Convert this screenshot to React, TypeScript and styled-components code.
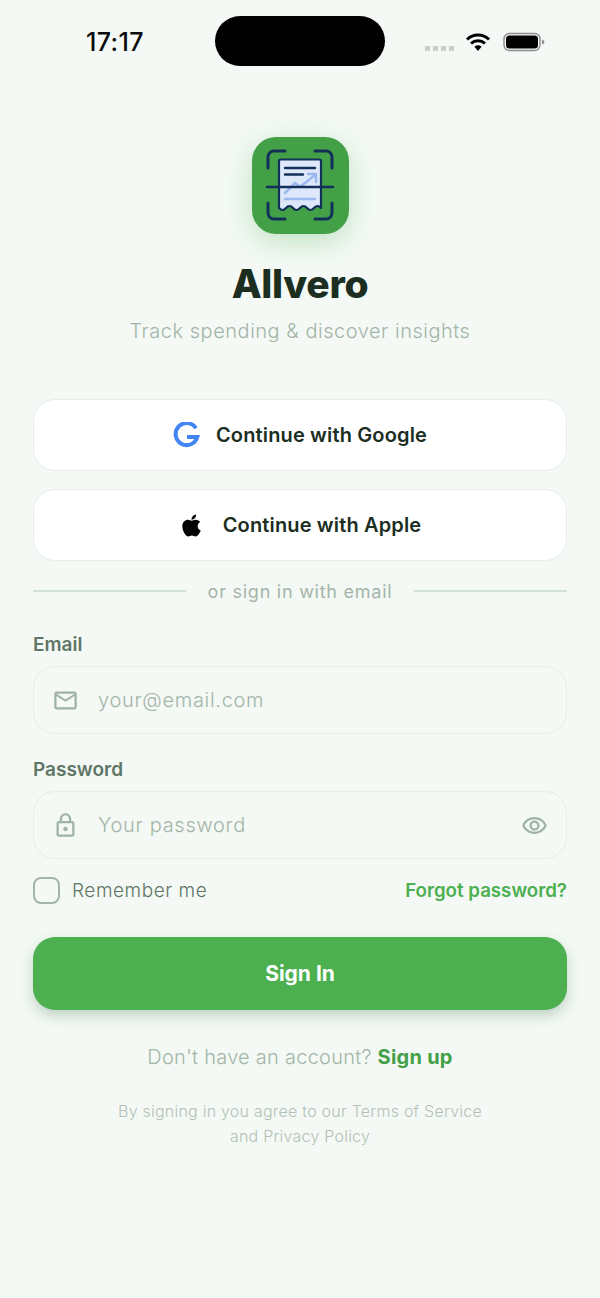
import { createGlobalStyle, styled } from "styled-components";
import { FaApple } from "react-icons/fa";
import { MdLockOutline, MdMailOutline, MdOutlineRemoveRedEye } from "react-icons/md";

const GlobalStyle = createGlobalStyle`
  html, body {
    margin: 0;
    padding: 0;
    background: #f4f9f5;
  }
  * {
    box-sizing: border-box;
  }
  body {
    font-family: Inter, "Noto Sans", sans-serif;
  }
`;

const Page = styled.main`
  width: 600px;
  height: 1298px;
  overflow: hidden;
  background: #f4f9f5;
`;

const StatusBar = styled.header`
  display: grid;
  grid-template-columns: 215px 170px 1fr;
  padding-top: 16px;
  height: 66px;
`;

const Clock = styled.div`
  padding: 11px 0 0 86px;
  font-size: 25px;
  line-height: 30px;
  font-weight: 500;
  letter-spacing: 0.4px;
  color: #0b0b0b;
`;

const Island = styled.div`
  height: 50px;
  border-radius: 25px;
  background: #000;
`;

const StatusIcons = styled.div`
  display: flex;
  align-items: flex-start;
  padding: 16px 0 0 40px;
`;

const Dots = styled.div`
  display: flex;
  gap: 3px;
  margin: 14px 11px 0 0;

  span {
    width: 5px;
    height: 5px;
    border-radius: 1px;
    background: #c9cdca;
  }
`;

const Battery = styled.svg`
  margin-left: 12px;
`;

const Hero = styled.section`
  display: flex;
  flex-direction: column;
  align-items: center;
  padding-top: 71px;
`;

const LogoTile = styled.div`
  width: 97px;
  height: 97px;
  border-radius: 24px;
  background: #43a047;
  box-shadow: 0 8px 28px rgba(76, 175, 80, 0.3);
`;

const Title = styled.h1`
  margin: 27px 0 0;
  font-size: 39px;
  line-height: 46px;
  font-weight: 800;
  letter-spacing: -0.3px;
  color: #1b2e1f;
`;

const Subtitle = styled.p`
  margin: 10px 0 0;
  font-size: 20px;
  line-height: 28px;
  font-weight: 300;
  letter-spacing: 0.52px;
  color: #a3b5a8;
`;

const Form = styled.section`
  display: flex;
  flex-direction: column;
  padding: 54px 33px 0;
`;

const SocialButton = styled.button<{ $gap: number }>`
  display: flex;
  align-items: center;
  justify-content: center;
  gap: ${(p) => p.$gap}px;
  width: 100%;
  height: 72px;
  margin-bottom: 18px;
  border: 1.5px solid #e6ede8;
  border-radius: 22px;
  background: #fff;
  font-family: inherit;
  font-size: 20px;
  font-weight: 600;
  letter-spacing: 0.15px;
  color: #1b2e1f;
`;

const Divider = styled.div`
  display: flex;
  align-items: center;
  gap: 22px;
  height: 24px;
  font-size: 18px;
  font-weight: 400;
  letter-spacing: 0.75px;
  color: #a3b5a8;

  &::before,
  &::after {
    content: "";
    flex: 1;
    height: 2px;
    background: #d3e0d6;
  }
`;

const FieldLabel = styled.label<{ $top: number }>`
  display: block;
  margin-top: ${(p) => p.$top}px;
  font-size: 19px;
  line-height: 24px;
  font-weight: 600;
  color: #5f7565;
`;

const InputBox = styled.div`
  display: flex;
  align-items: center;
  height: 68px;
  margin-top: 9px;
  padding: 0 18px;
  border: 1.5px solid #e6ede8;
  border-radius: 22px;
  background: #f4f9f5;
  color: #9fb3a5;
`;

const Placeholder = styled.span`
  flex: 1;
  margin-left: 19px;
  font-size: 20px;
  font-weight: 300;
  letter-spacing: 0.7px;
  color: #a3b5a8;
`;

const OptionsRow = styled.div`
  display: flex;
  align-items: center;
  justify-content: space-between;
  height: 26px;
  margin-top: 18px;
`;

const Remember = styled.div`
  display: flex;
  align-items: center;
  gap: 12px;
  font-size: 19px;
  font-weight: 300;
  letter-spacing: 0.55px;
  color: #5f7565;
`;

const CheckBox = styled.span`
  width: 27px;
  height: 27px;
  border: 2px solid #a3b5a8;
  border-radius: 8px;
`;

const ForgotLink = styled.a`
  font-size: 18.7px;
  font-weight: 600;
  color: #4caf50;
`;

const SignInButton = styled.button`
  height: 73px;
  margin-top: 34px;
  border: 0;
  border-radius: 22px;
  background: #4caf50;
  box-shadow: 0 6px 14px rgba(60, 110, 70, 0.28);
  font-family: inherit;
  font-size: 21px;
  font-weight: 700;
  color: #fff;
`;

const SignUpLine = styled.p`
  margin: 33px 0 0;
  text-align: center;
  font-size: 20px;
  line-height: 28px;
  font-weight: 300;
  letter-spacing: 0.25px;
  color: #a3b5a8;

  a {
    font-weight: 700;
    color: #43a047;
  }
`;

const Terms = styled.p`
  margin: 28px 0 0;
  text-align: center;
  font-size: 16px;
  line-height: 25px;
  font-weight: 300;
  letter-spacing: 0.23px;
  color: #b3c1b7;
`;

function Logo() {
  return (
    <svg width="97" height="97" viewBox="0 0 97 97" fill="none" strokeLinecap="round" strokeLinejoin="round">
      <path
        d="M27 24a1.500 1.500 0 0 1 1.500-1.500h39a1.500 1.500 0 0 1 1.500 1.500v47q-3.500-4-7 0t-7 0t-7 0t-7 0t-7 0t-7 0z"
        fill="#dde8fb"
        stroke="#12305a"
        strokeWidth="2.200"
      />
      <path d="M33 31h30M33 37.500h18" stroke="#12305a" strokeWidth="2.400" />
      <path d="M33 56l10-10 5 4 15-12M56 37h8v8M33 62h30" stroke="#9db8ee" strokeWidth="2.500" />
      <path d="M15 50h66" stroke="#12305a" strokeWidth="2.600" />
      <path
        d="M33 14h-11a6 6 0 0 0-6 6v11M63 14h11a6 6 0 0 1 6 6v11M33 82h-11a6 6 0 0 1-6-6v-10M63 82h11a6 6 0 0 0 6-6v-10"
        stroke="#12305a"
        strokeWidth="3"
      />
    </svg>
  );
}

function GoogleMark() {
  return (
    <svg width="27" height="27" viewBox="0 0 27 27" fill="none">
      <path
        d="M23 6.200A11 11 0 1 0 24.300 15H14"
        stroke="#4285f4"
        strokeWidth="4"
      />
    </svg>
  );
}

export default function App() {
  return (
    <Page>
      <GlobalStyle />
      <StatusBar>
        <Clock>17:17</Clock>
        <Island />
        <StatusIcons>
          <Dots>
            <span />
            <span />
            <span />
            <span />
          </Dots>
          <svg width="26" height="20" viewBox="0 0 26 20" fill="none" stroke="#000" strokeWidth="3">
            <path d="M2 7.500a16 16 0 0 1 22 0M6 11.500a10.500 10.500 0 0 1 14 0" />
            <path d="M9.500 14.800a5 5 0 0 1 7 0L13 19z" fill="#000" stroke="none" />
          </svg>
          <Battery width="42" height="20" viewBox="0 0 42 20" fill="none">
            <rect x="1" y="1.500" width="36" height="17" rx="5.500" stroke="#8c8c8c" strokeWidth="1.400" />
            <rect x="3" y="3.500" width="32" height="13" rx="3.500" fill="#000" />
            <path d="M39 7.500q2.500 1 2.500 2.500t-2.500 2.500z" fill="#8c8c8c" />
          </Battery>
        </StatusIcons>
      </StatusBar>

      <Hero>
        <LogoTile>
          <Logo />
        </LogoTile>
        <Title>Allvero</Title>
        <Subtitle>Track spending &amp; discover insights</Subtitle>
      </Hero>

      <Form>
        <SocialButton $gap={16}>
          <GoogleMark />
          Continue with Google
        </SocialButton>
        <SocialButton $gap={19}>
          <FaApple size={25} color="#000" />
          Continue with Apple
        </SocialButton>
        <Divider>or sign in with email</Divider>

        <FieldLabel $top={30}>Email</FieldLabel>
        <InputBox>
          <MdMailOutline size={27} />
          <Placeholder>your@email.com</Placeholder>
        </InputBox>

        <FieldLabel $top={24}>Password</FieldLabel>
        <InputBox>
          <MdLockOutline size={27} />
          <Placeholder>Your password</Placeholder>
          <MdOutlineRemoveRedEye size={27} />
        </InputBox>

        <OptionsRow>
          <Remember>
            <CheckBox />
            Remember me
          </Remember>
          <ForgotLink>Forgot password?</ForgotLink>
        </OptionsRow>

        <SignInButton>Sign In</SignInButton>

        <SignUpLine>
          Don't have an account? <a>Sign up</a>
        </SignUpLine>
        <Terms>
          By signing in you agree to our Terms of Service
          <br />
          and Privacy Policy
        </Terms>
      </Form>
    </Page>
  );
}
